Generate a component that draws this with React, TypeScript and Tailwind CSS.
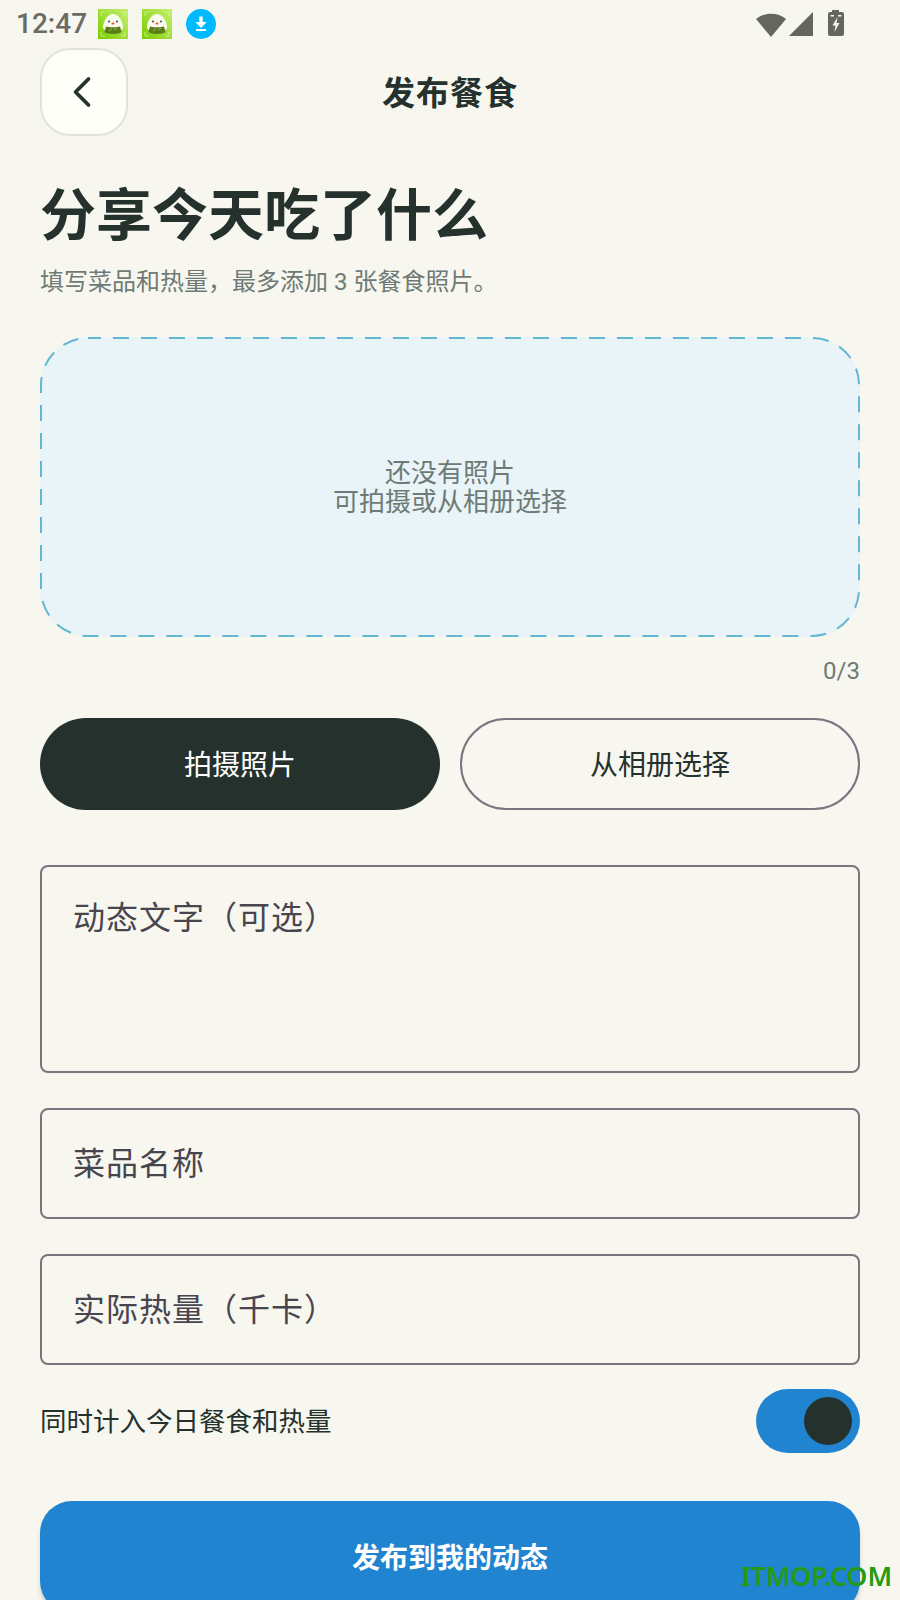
// Publish-meal screen with Android status bar on top.
import { ChevronLeft } from "lucide-react";

const FONT = "font-['Roboto','Noto_Sans_CJK_SC',sans-serif]";

function MascotIcon() {
  return (
    <svg width="30" height="30" viewBox="0 0 30 30" className="shrink-0">
      <defs>
        <linearGradient id="mascot-bg" x1="1" y1="0" x2="0" y2="1">
          <stop offset="0" stopColor="#c8f070" />
          <stop offset="1" stopColor="#78cc00" />
        </linearGradient>
      </defs>
      <rect width="30" height="30" fill="url(#mascot-bg)" />
      <path d="M15 5c5 0 9 6 10 12 .5 3-1 5-10 5S4.500 20 5 17c1-6 5-12 10-12z" fill="#f8faee" />
      <path d="M8 17.500c2 1 12 1 14 0l1.500 5.500c-2 2.500-15 2.500-17 0z" fill="#5a7d1a" />
      <path d="M11 22l3-2M16 21l3-2" stroke="#a9c96a" strokeWidth="0.800" />
      <circle cx="11" cy="12.500" r="0.900" fill="#333" />
      <circle cx="19" cy="12.500" r="0.900" fill="#333" />
      <rect x="13.500" y="13.500" width="3" height="2" rx="1" fill="#e8584c" />
      <path d="M3 7V3h4M23 3h4v4M3 23v4h4M27 23v4h-4" fill="none" stroke="#d8f5a0" strokeWidth="0.800" />
    </svg>
  );
}

function StatusBar() {
  return (
    <div className="flex h-[48px] items-center pl-[16px] pr-[56px] text-[#6b6b66]">
      <span className="w-[72px] text-[28px] font-medium leading-none">12:47</span>
      <div className="ml-[10px] flex items-center gap-[14px]">
        <MascotIcon />
        <MascotIcon />
        <svg width="30" height="30" viewBox="0 0 30 30">
          <circle cx="15" cy="15" r="15" fill="#00baff" />
          <path d="M13.300 7.500h3.400V13h4L15 19l-5.700-6h4z" fill="#fff" />
          <rect x="10" y="20" width="10" height="2" fill="#fff" />
        </svg>
      </div>
      <div className="ml-auto flex items-center">
        <svg width="30" height="25" viewBox="0 0 30 25">
          <path d="M0 7C8 0 22 0 30 7L15 25z" fill="#666660" />
        </svg>
        <svg width="24" height="24" viewBox="0 0 24 24" className="ml-[3px]">
          <path d="M24 0v24H0z" fill="#666660" />
        </svg>
        <svg width="16" height="26" viewBox="0 0 16 26" className="mb-[2px] ml-[15px]">
          <path d="M4 0h7v2h3a2 2 0 0 1 2 2v20a2 2 0 0 1-2 2H2a2 2 0 0 1-2-2V4a2 2 0 0 1 2-2h2z" fill="#666660" />
          <path d="M9.500 7L4.500 15.500h3L6.500 22l5-9H8.500z" fill="#f7f7ef" />
          <rect x="2.500" y="5" width="3.500" height="1.500" fill="#f7f7ef" />
          <rect x="10" y="5" width="3.500" height="1.500" fill="#f7f7ef" />
        </svg>
      </div>
    </div>
  );
}

function TextField({ label, className }: { label: string; className: string }) {
  return (
    <div className={`rounded-[8px] border-2 border-[#79747e] px-[31px] text-[32px] leading-[40px] tracking-[1px] text-[#49454f] ${className}`}>
      {label}
    </div>
  );
}

export default function App() {
  return (
    <div className={`relative h-[1600px] w-[900px] overflow-hidden bg-[#f7f7ef] ${FONT}`}>
      <StatusBar />

      <div className="px-[40px]">
        <div className="relative flex h-[88px] items-center justify-center">
          <button
            type="button"
            className="absolute left-0 top-0 flex h-[88px] w-[88px] items-center justify-center rounded-[30px] border-2 border-[#e4e3d8] bg-[#fffffa] text-[#25312d]"
          >
            <ChevronLeft size={52} strokeWidth={1.7} className="mr-[4px]" />
          </button>
          <span className="pt-[4px] text-[33px] font-bold tracking-[1px] text-[#25312d]">发布餐食</span>
        </div>

        <h1 className="mt-[44px] text-[56px] font-bold leading-[72px] text-[#25312d]">
          分享今天吃了什么
        </h1>
        <p className="mt-[14px] text-[24px] leading-[32px] text-[#6e7a76]">
          填写菜品和热量，最多添加 3 张餐食照片。
        </p>

        <div className="relative mt-[39px] flex h-[300px] flex-col items-center justify-center rounded-[48px] bg-[#e8f4f8] pt-[2px] text-[26px] leading-[29px] text-[#6e7a76]">
          <svg width="820" height="300" className="absolute inset-0">
            <rect x="1" y="1" width="818" height="298" rx="47" fill="none" stroke="#63b7d3" strokeWidth="2" strokeDasharray="16 12" strokeDashoffset="3" />
          </svg>
          <span>还没有照片</span>
          <span>可拍摄或从相册选择</span>
        </div>
        <div className="mt-[18px] text-right text-[24px] leading-[32px] text-[#6e7a76]">0/3</div>

        <div className="mt-[31px] grid grid-cols-2 gap-[20px]">
          <button type="button" className="h-[92px] rounded-full bg-[#25312d] pt-[4px] text-[28px] text-white">
            拍摄照片
          </button>
          <button type="button" className="h-[92px] rounded-full border-2 border-[#79747e] pt-[4px] text-[28px] text-[#25312d]">
            从相册选择
          </button>
        </div>

        <TextField label="动态文字（可选）" className="mt-[55px] h-[208px] pt-[31px]" />
        <TextField label="菜品名称" className="mt-[35px] flex h-[111px] items-center" />
        <TextField label="实际热量（千卡）" className="mt-[35px] flex h-[111px] items-center" />

        <div className="mt-[24px] flex h-[64px] items-center justify-between">
          <span className="pt-[1px] text-[26.500px] text-[#25312d]">同时计入今日餐食和热量</span>
          <div className="flex h-[64px] w-[104px] items-center justify-end rounded-full bg-[#2184d0] pr-[8px]">
            <div className="h-[48px] w-[48px] rounded-full bg-[#25312d]" />
          </div>
        </div>

        <button
          type="button"
          className="mt-[48px] h-[112px] w-full rounded-[32px] bg-[#2184d0] pt-[4px] text-[28px] font-bold text-white shadow-[0_6px_6px_-2px_rgba(0,0,0,0.25)]"
        >
          发布到我的动态
        </button>
      </div>

      {/* watermark burned into the screenshot */}
      <span className="absolute left-[741px] top-[1557px] font-['Noto_Sans',sans-serif] text-[26.500px] font-semibold leading-[38px] text-[#259a12]">
        ITMOP.COM
      </span>
    </div>
  );
}
